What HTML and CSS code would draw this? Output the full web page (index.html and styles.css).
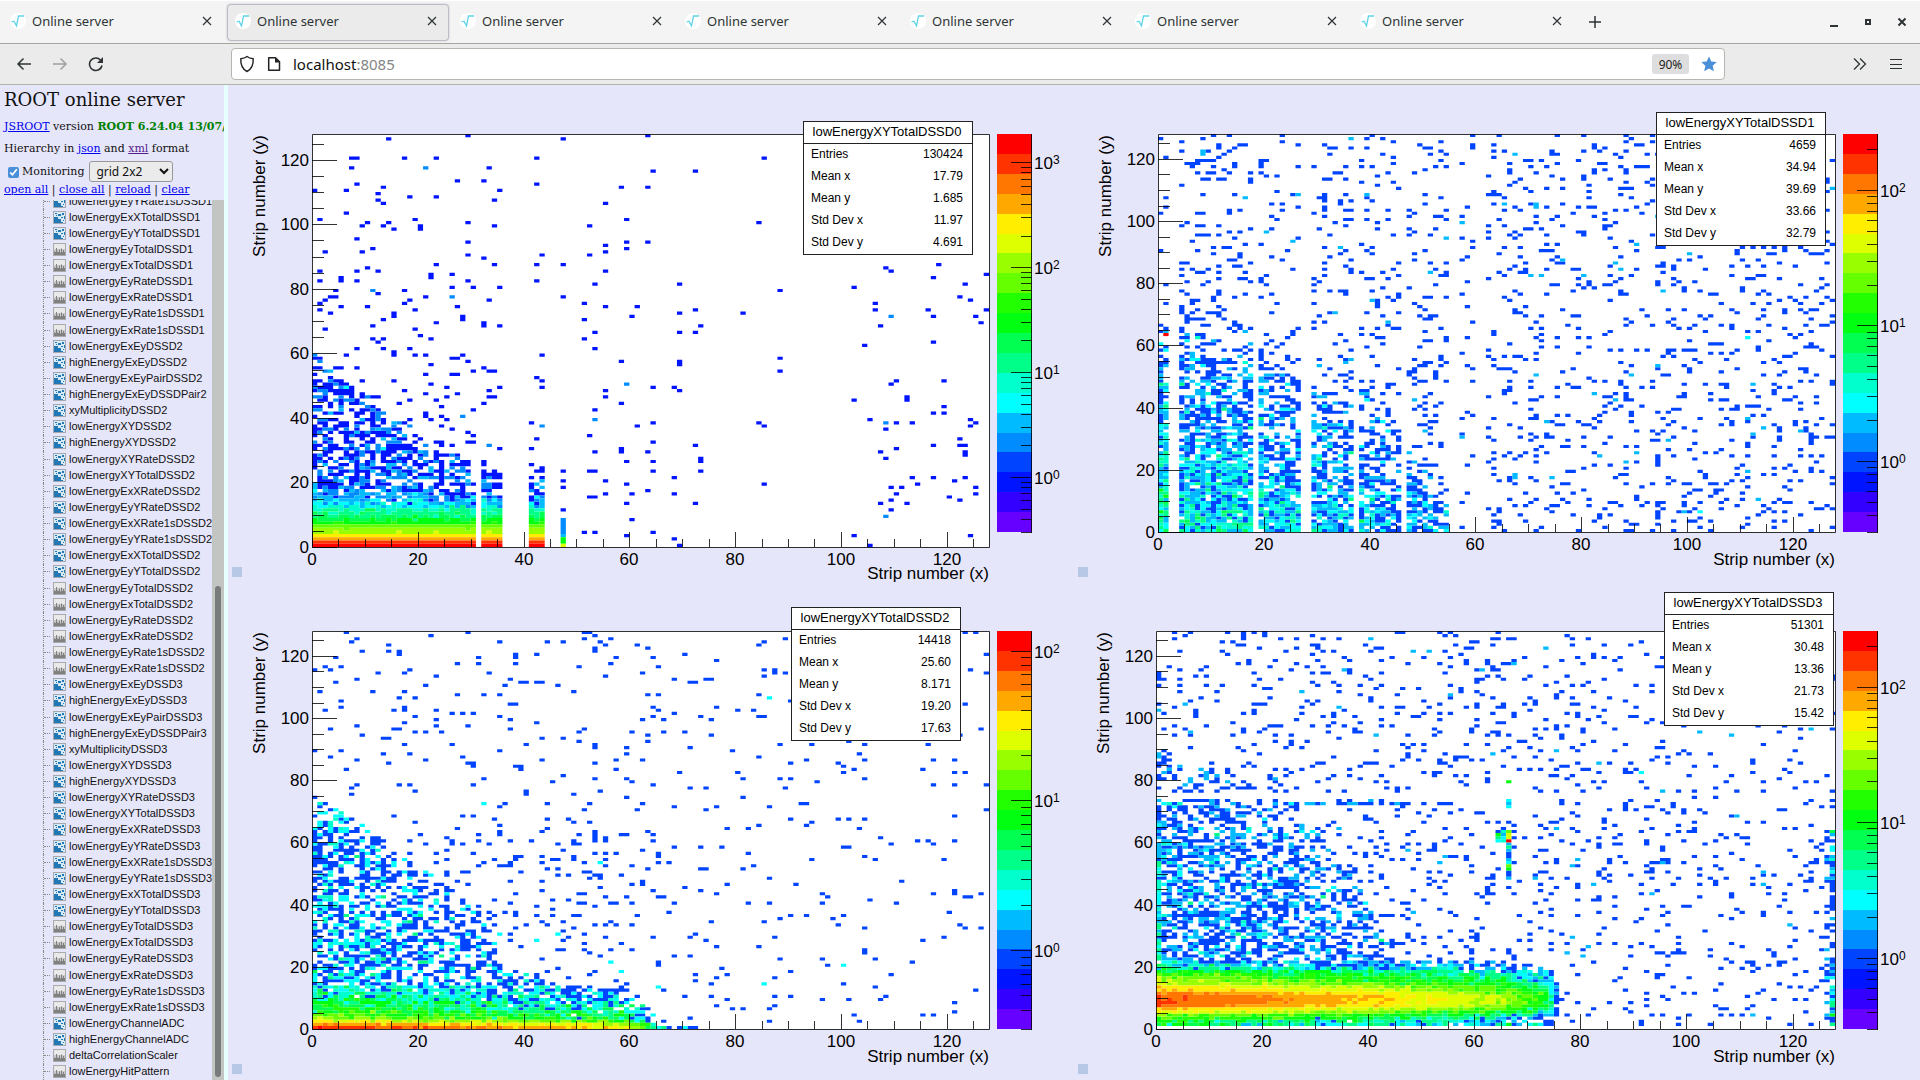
FILE: index.html
```html
<!DOCTYPE html>
<html lang="en">
<head>
  <meta charset="UTF-8">
  <title>Online server</title>
  <link rel="stylesheet" href="styles.css">
</head>
<body>
  <svg class="defs" aria-hidden="true">
    <symbol id="ic-root" viewBox="0 0 16 16"><circle cx="8" cy="8" r="8" fill="#fff"/><path d="M1.500 9l2.500-.8 2.500 4.600L8.500 3h5.500" fill="none" stroke="#5fd3e6" stroke-width="1.300"/></symbol>
    <symbol id="ic-x" viewBox="0 0 10 10"><path d="M1 1l8 8M9 1L1 9" fill="none" stroke="currentColor" stroke-width="1.200"/></symbol>
    <symbol id="ic-h1" viewBox="0 0 13 13"><path d="M0 0h13v13H0z" fill="#aaa"/><path d="M1 1h11v11H1z" fill="#e9e9e9"/><path d="M1 6h11v6H1z" fill="#c8c8c8"/><path d="M1.500 12V8.500M2.500 12V9M3.500 12V5M4.500 12V8.500M5.500 12V9M6.500 12V6.500M7.500 12V9.500M8.500 12V5.500M9.500 12V9M10.500 12V7M11.500 12V9" stroke="#808080" stroke-width="1"/></symbol>
    <symbol id="ic-h2" viewBox="0 0 13 13"><path d="M0 0h13v13H0z" fill="#a3a9ae"/><path d="M1 1h11v11H1z" fill="#d8eaf6"/><path d="M1 6h4v2h3v3h2v1H1zM2 2h2v1H2zM5 3h3v2H5zM9 2h2v2H9zM8 6h2v1H8zM11 5h1v3h-1zM10 9h1v1h-1zM3 4h1v1H3z" fill="#2277b5"/></symbol>
  </svg>

  <div class="tabs" id="tabs"></div>

  <div class="nav">
    <div class="nav-left">
      <button class="icon-btn" aria-label="Back"><svg width="16" height="16" viewBox="0 0 16 16"><path d="M15 8H2M7.500 2.500L2 8l5.500 5.500" fill="none" stroke="#2e3436" stroke-width="1.500"/></svg></button>
      <button class="icon-btn dim" aria-label="Forward"><svg width="16" height="16" viewBox="0 0 16 16"><path d="M1 8h13M8.500 2.500L14 8l-5.500 5.500" fill="none" stroke="#2e3436" stroke-width="1.500"/></svg></button>
      <button class="icon-btn" aria-label="Reload"><svg width="16" height="16" viewBox="0 0 16 16"><path d="M14 9.500A6.300 6.300 0 1 1 12.500 4" fill="none" stroke="#2e3436" stroke-width="1.600"/><path d="M15 1v6H9z" fill="#2e3436"/></svg></button>
    </div>
    <div class="url">
      <svg width="16" height="18" viewBox="0 0 16 18"><path d="M8 1.500c2 1.500 4 2 6.200 2.300C14.500 9.500 13 14 8 16.500 3 14 1.500 9.500 1.800 3.800 4 3.500 6 3 8 1.500z" fill="none" stroke="#222" stroke-width="1.400"/></svg>
      <svg width="14" height="16" viewBox="0 0 14 16"><path d="M1.700 1.700h6.800l4 4v8.600H1.700z" fill="none" stroke="#222" stroke-width="1.500" stroke-linejoin="round"/><path d="M8 1.500v5h5z" fill="#222"/></svg>
      <span class="address">localhost<span class="port">:8085</span></span>
      <button class="zoom">90%</button>
      <button class="star" aria-label="Bookmark"><svg width="16" height="16" viewBox="0 0 16 16"><path d="M8 .5l2.300 4.900 5.400.7-4 3.700 1.100 5.400L8 12.600l-4.800 2.600 1.100-5.400-4-3.700 5.400-.7z" fill="#4a90d9"/></svg></button>
    </div>
    <div class="nav-right">
      <button class="icon-btn" aria-label="More tools"><svg width="14" height="14" viewBox="0 0 14 14"><path d="M1 1.500L6.500 7 1 12.500M7 1.500L12.500 7 7 12.500" fill="none" stroke="#2e3436" stroke-width="1.300"/></svg></button>
      <button class="icon-btn" aria-label="Menu"><svg width="12" height="12" viewBox="0 0 12 12"><path d="M0 1.500h12M0 6.500h12M0 10.500h12" stroke="#2e3436" stroke-width="1"/></svg></button>
    </div>
  </div>

  <div class="page">
    <div class="side">
      <h1>ROOT online server</h1>
      <p><a href="#">JSROOT</a> version <b class="version">ROOT 6.24.04 13/07/2021</b></p>
      <p>Hierarchy in <a href="#">json</a> and <a href="#" class="seen">xml</a> format</p>
      <div class="controls">
        <label class="monitor"><input type="checkbox" checked>Monitoring</label>
        <select aria-label="Layout"><option>grid 2x2</option></select>
      </div>
      <div class="links"><a href="#">open all</a> | <a href="#">close all</a> | <a href="#">reload</a> | <a href="#">clear</a></div>
      <div class="browser">
        <ul class="tree" id="tree"></ul>
        <div class="scroll"><div class="thumb"></div></div>
      </div>
    </div>
    <div class="splitter"></div>
    <div class="grid" id="grid"></div>
  </div>
  <script src="main.js"></script>
</body>
</html>
```
FILE: styles.css
```css
* { box-sizing: border-box; }
html, body { height: 100%; margin: 0; }
body { display: flex; flex-direction: column; background: #e6e6fa; overflow: hidden; font-family: "Noto Sans", sans-serif; }
button { border: none; background: transparent; padding: 0; font-family: inherit; color: inherit; display: flex; align-items: center; justify-content: center; }
.defs { display: none; }

.tabs { display: flex; align-items: center; height: 44px; background: #f4f4f4; border-top: 1px solid #fff; border-bottom: 1px solid #a5a5a0; color: #2e3436; }
.tab { width: 222px; height: 37px; margin-right: 3px; padding: 0 11px 2px 7px; display: flex; align-items: center; gap: 6px; font-size: 13px; border: 1px solid transparent; border-radius: 4px; }
.tab:first-child { margin-left: 2px; }
.tab.active { background: #ebebeb; border-color: #bcbcc6; box-shadow: 0 0 2px #bcbcc6; }
.tab span { flex: 1; }
.new-tab { margin-left: 11px; }
.window { margin-left: auto; margin-right: 12px; display: flex; gap: 22px; }
.window button { width: 12px; height: 12px; }

.nav { display: flex; align-items: center; height: 41px; background: #ebebeb; border-bottom: 1px solid #b3b3ad; }
.nav-left { width: 231px; padding-left: 16px; display: flex; gap: 20px; }
.nav-right { width: 195px; padding-right: 18px; display: flex; gap: 23px; justify-content: flex-end; }
.icon-btn { min-width: 12px; height: 16px; }
.dim { opacity: 0.4; }
.url { flex: 1; height: 32px; padding: 0 7px; background: #fff; border: 1px solid #b6b6b0; border-radius: 4px; display: flex; align-items: center; gap: 12px; }
.address { flex: 1; padding-bottom: 1px; font-size: 15px; color: #111; }
.port { color: #858585; }
.zoom { width: 37px; height: 20px; border-radius: 3px; background: #dedede; font-size: 12px; color: #222; }

.page { flex: 1; min-height: 0; display: flex; }
.side { width: 224px; display: flex; flex-direction: column; overflow: hidden; font: 11px/16px "DejaVu Serif", serif; color: #111; }
.side h1 { margin: 2px 4px 7px; font-size: 18px; line-height: 25px; font-weight: normal; }
.side p { margin: 0 0 6px 4px; white-space: nowrap; }
a { color: #0000ee; }
.seen { color: #551a8b; }
.version { color: green; }
.controls { display: flex; align-items: center; gap: 5px; margin: -2px 0 0 8px; }
.monitor { display: flex; align-items: center; gap: 3px; }
.monitor input { width: 11px; height: 11px; margin: 1px 0 0; accent-color: #4a90d9; }
.controls select { width: 84px; height: 21px; padding: 0 2px; border: 1px solid #999; border-radius: 3px; background: #ebebeb; font: 12px "Noto Sans", sans-serif; color: #111; }
.links { margin-left: 4px; height: 18px; }
.browser { flex: 1; min-height: 0; display: flex; overflow: hidden; }

.tree { flex: 1; margin: -7px 0 0 43px; padding: 0; list-style: none; display: flex; flex-direction: column; font: 11px/13px "Liberation Sans", sans-serif; }
.tree li { flex: 1; display: flex; align-items: center; gap: 3px; border-left: 1px dotted #888; }
.tree li::before { content: ""; width: 6px; border-top: 1px dotted #888; }
.tree svg { width: 13px; height: 13px; }
.tree a { color: #111; text-decoration: none; }
.scroll { width: 12px; display: flex; align-items: flex-end; justify-content: center; background: #c2c5c2; padding-bottom: 3px; }
.thumb { width: 6px; height: 56%; border-radius: 3px; background: #787b7b; }
.splitter { width: 4px; background: #e8ffff; }

.grid { flex: 1; display: grid; grid-template-columns: 1fr 1fr; grid-template-rows: 1fr 1fr; padding-bottom: 1px; }
.pad { position: relative; min-width: 0; min-height: 0; }
.plot { display: block; width: 100%; height: 100%; font: 17px "Liberation Sans", sans-serif; }
.plot .line { fill: none; stroke: #000; stroke-opacity: 0.8; }
.plot .handle { fill: #b6c8e6; }
.plot .exp { font-size: 12px; }
.end { text-anchor: end; }
.mid { text-anchor: middle; }

.stats { position: absolute; width: 170px; background: #fff; border: 1px solid #222; border-collapse: separate; border-spacing: 0; font: 12px "Liberation Sans", sans-serif; color: #000; }
.stats th, .stats td { height: 22px; padding: 0 9px 2px 7px; text-align: left; font-weight: normal; }
.stats thead th { text-align: center; font-size: 13px; border-bottom: 1px solid #222; padding-bottom: 3px; }
.stats td { text-align: right; }
.stats tr:last-child td { height: 20px; }
.stats0 { left: 575px; top: 36px; }
.stats1 { left: 582px; top: 27px; }
.stats2 { left: 563px; top: 25px; }
.stats3 { left: 590px; top: 10px; }
```
FILE: main.js
```js
const SVG = 'http://www.w3.org/2000/svg';
const COLORS = ['#6600ff', '#3300ff', '#0014ff', '#0044ff', '#008cff', '#00bbff', '#00ffff', '#00ffcc', '#00ff88', '#00ff50',
  '#00ff11', '#22ff00', '#66ff00', '#99ff00', '#ddff00', '#ffee00', '#ffa800', '#ff7700', '#ff3300', '#ff0000'];

// browser tabs
const tabs = document.getElementById('tabs');
let html = '';
for (let i = 0; i < 7; i++) {
  html += `<div class="tab${i === 1 ? ' active' : ''}"><svg width="16" height="16"><use href="#ic-root"/></svg><span>Online server</span>` +
    '<button aria-label="Close tab"><svg width="10" height="10"><use href="#ic-x"/></svg></button></div>';
}
html += '<button class="new-tab" aria-label="New tab"><svg width="14" height="14"><path d="M7 1v12M1 7h12" stroke="#2e3436" stroke-width="1.500"/></svg></button>';
html += '<div class="window"><button aria-label="Minimize"><svg width="12" height="12"><path d="M2 9h8v2H2z" fill="#2e3436"/></svg></button>' +
  '<button aria-label="Maximize"><svg width="12" height="12"><path d="M4 4h4v4H4z" fill="none" stroke="#2e3436" stroke-width="2"/></svg></button>' +
  '<button aria-label="Close"><svg width="12" height="12"><path d="M2.500 2.500l7 7M9.500 2.500l-7 7" stroke="#2e3436" stroke-width="2"/></svg></button></div>';
tabs.innerHTML = html;

// hierarchy
const first = ['lowEnergyEyYRate1s', 'lowEnergyExXTotal', 'lowEnergyEyYTotal', 'lowEnergyEyTotal', 'lowEnergyExTotal',
  'lowEnergyEyRate', 'lowEnergyExRate', 'lowEnergyEyRate1s', 'lowEnergyExRate1s'];
const full = ['lowEnergyExEy', 'highEnergyExEy', 'lowEnergyExEyPair', 'highEnergyExEyDSSDPair', 'xyMultiplicity', 'lowEnergyXY', 'highEnergyXY',
  'lowEnergyXYRate', 'lowEnergyXYTotal', 'lowEnergyExXRate', 'lowEnergyEyYRate', 'lowEnergyExXRate1s'].concat(first);
const items = first.map(n => n + 'DSSD1');
for (const d of [2, 3]) full.forEach(n => items.push(n.includes('DSSD') ? n + d : n + 'DSSD' + d));
items.push('lowEnergyChannelADC', 'highEnergyChannelADC', 'deltaCorrelationScaler', 'lowEnergyHitPattern');
document.getElementById('tree').innerHTML = items.map(n => {
  const one = /Energy(Ex|Ey)(Total|Rate)|Scaler|Pattern/.test(n);
  return `<li><svg><use href="#ic-h${one ? 1 : 2}"/></svg><a href="#">${n}</a></li>`;
}).join('');

// random numbers
let seed = 7;
function rnd() {
  seed = (seed * 1664525 + 1013904223) % 4294967296;
  return seed / 4294967296;
}
function poisson(m) {
  if (m > 30) return Math.round(m + Math.sqrt(m) * (rnd() + rnd() + rnd() - 1.5) * 1.6);
  let k = 0, p = rnd();
  const lim = Math.exp(-m);
  while (p > lim) { k++; p *= rnd(); }
  return k;
}
// piecewise linear lookup
function lerp(t, pts) {
  if (t <= pts[0][0]) return pts[0][1];
  for (let i = 1; i < pts.length; i++) {
    const [x0, y0] = pts[i - 1], [x1, y1] = pts[i];
    if (t <= x1) return y0 + (y1 - y0) * (t - x0) / (x1 - x0);
  }
  return pts[pts.length - 1][1];
}

// row:columns, * marks a double hit
const HITS0 = '127:29 63|126:14 47|125:103|120:7 8 17 23 42 85|117:7 21* 33|116:64 72|113:27 32|112:8 42|111:13 58 63|110:0 6 35|109:12|108:18 23|' +
  '107:12 34|106:13 55|103:6|101:1 19 59|100:10 14 29 84|99:9 13 20 34 52|98:15 20|95:8|94:29 59 63|93:55|92:11 59|91:2 9 55|90:29 43 52|89:32|' +
  '87:23 34 42 47 118|86:10 108|85:1 8 12 55 109|84:22 26 127|83:5 22 117|82:1 5 8 29 42|81:53 69 123|80:26 30 35 102|79:4 11* 17 88|78:12|' +
  '77:3 4 21 26* 47 122|76:2 18 33 124|75:1 17 51 106|74:5 10 27 55 61|73:1 19 72 106 116 127|72:3 15 69 81|71:15 28 60 109* 117 125|70:13 28 51|' +
  '69:23 32 126|68:11 32 35 73 107|67:2 19|66:53 69 72|65:20|64:11 13 22 51|63:12 117|62:104|61:8 13 18 53|59:15 19 21 28 43|58:88|57:58 69|56:69|' +
  '55:32|54:30 33 34 88|52:42|51:43 110 119|50:59* 109|49:35 43 64 68|48:33 55 69|46:33 34 55 112|45:102 112|44:32 58|43:119|42:30 53|41:117 119|' +
  '40:28*|39:53* 105 124|38:41 64 84 108* 110 113 125|37:43* 61 85 124|36:108|34:30 52|33:42 122|32:30 64|31:33* 72 117 122 123|30:35 41 58 110|' +
  '29:53 58 63 107 123|28:123|27:73 108|26:32 59 64 73|25:32 41|24:43|23:34 42 43 47 52 53 64 73|22:35|21:43 68 113 117 123|20:47 55 121|19:59 85 114|' +
  '18:47 109 111 125|17:63|16:55 60 68 110 125|15:52 53 120|14:109 122|13:59 72 107 112|11:47 109|9:108*|8:60|4:51 53 64|3:59 102 124|2:68|0:69 105';

function hits0() {
  const map = {};
  HITS0.split('|').forEach(s => {
    const [row, cols] = s.split(':');
    cols.split(' ').forEach(c => { map[parseInt(c) + ',' + row] = c.endsWith('*') ? 2 : 1; });
  });
  return map;
}
const known = hits0();

function count0(x, y) {
  if (known[x + ',' + y]) return known[x + ',' + y];
  if (x === 47 && y < 9) return [150, 25, 25, 3, 2, 2, 2, 2, 2][y];
  if (x === 31 || (x > 35 && x < 41) || x > 43 || y > 60) return 0;
  const edge = lerp(x, [[0, 60], [4, 53], [10, 46], [20, 33], [30, 25], [44, 20]]);
  let l = lerp(y, [[0, 3.2], [1, 3], [2, 2.65], [3, 2.4], [4, 2.1], [5, 2], [6, 1.85], [7, 1.5], [8, 1.38], [9, 1.2], [11, 1], [13, 0.75], [15, 0.45], [18, 0.2], [22, 0.05], [40, -0.05], [60, -0.1]]);
  if (y > 11) l -= x * 0.006;
  if (y > edge) return x < 30 ? poisson(0.09) : 0;
  return poisson(Math.pow(10, l));
}

function count1(x, y) {
  if ([2, 3, 18, 27, 28, 37, 46, 55, 56, 60, 61].includes(x)) return 0;
  if (x === 1 && y === 63) return 240;
  const bg = x < 55 ? 0.12 : x < 60 ? 0.08 : 0.12;
  const edge = lerp(x, [[0, 66], [18, 60], [26, 48], [36, 42], [45, 32], [49, 16], [54, 8], [58, 0]]);
  if (x > 54 || y > edge + 8) return poisson(bg);
  if (y > edge) return poisson(0.25);
  let m = lerp(y, [[0, 3.6], [12, 2.4], [25, 1.5], [45, 0.85], [65, 0.5]]);
  if (x > 18) m *= lerp(x, [[19, 0.75], [45, 0.4], [54, 0.3]]);
  if (x < 2) m *= 1.7;
  return poisson(m);
}

function count2(x, y) {
  const edge = lerp(x, [[0, 74], [10, 64], [16, 56], [22, 49], [31, 37], [36, 21], [45, 14], [58, 12], [64, 5], [65, 0]]);
  if (y > edge) return poisson(x < 66 ? (y < 64 && x > 24 ? 0.1 : 0.045) : 0.028);
  let l = lerp(y, [[0, 1.95], [1, 1.75], [2, 1.5], [3, 1.25], [5, 1.05], [8, 0.8], [11, 0.55], [15, 0.25], [22, 0.1], [50, 0], [74, -0.1]]);
  l -= y < 3 ? x * 0.007 : x * 0.009;
  if (x > 59) l -= (x - 59) * 0.15;
  return poisson(Math.pow(10, l));
}

function count3(x, y) {
  if (y === 0) return 0;
  if (x === 66) {
    if (y === 60) return 240;
    if (y === 61 || y === 62) return 40;
    if (y === 63 || y === 52) return 20;
    if (y === 51 || y === 79 || y === 1) return 10;
    if (y > 47 && y < 60 || y > 69 && y < 74) return poisson(2);
  }
  if ((x === 64 || x === 65) && y > 59 && y < 64) return poisson(6);
  if (x === 127 && (y > 47 && y < 64 || y < 22)) return poisson(y === 4 || y === 63 ? 10 : 2.2);
  if (x > 125 && y < 64) return poisson(0.6);
  if ((y === 74 || y === 75) && x < 100) return 0;
  if (y < 22 && x < 76) {
    const peak = lerp(x, [[0, 2.12], [20, 1.98], [40, 1.82], [55, 1.65], [66, 1.45], [71, 1.2], [74, 0.9], [76, 0]]);
    const off = lerp(y, [[1, -1.2], [2, -1.15], [3, -0.9], [4, -0.75], [5, -0.42], [6, -0.25], [7, -0.06], [8, 0], [10, 0], [11, -0.1], [12, -0.25], [13, -0.35], [14, -0.55], [16, -0.75], [18, -1], [19, -1.3], [21, -1.8]]);
    return poisson(Math.pow(10, peak + off));
  }
  if (y === 72 && x < 58) return poisson(0.8);
  const edge = lerp(x, [[0, 88], [10, 85], [22, 73], [30, 62], [37, 50], [40, 38], [44, 24], [46, 20]]);
  const bg = x < 78 ? 0.11 : 0.085;
  if (x > 45 || y > edge) return poisson(bg);
  let m = y > 75 ? 0.45 : lerp(y, [[22, 1], [45, 0.9], [75, 0.6]]) * lerp(x, [[0, 1.4], [8, 1.1], [40, 0.75]]);
  if (x === 0) m *= 2.5;
  return poisson(m);
}

const pads = [
  { name: 'DSSD0', count: count0, bottom: 462, left: 84, lmax: 3.27, stats: ['130424', '17.79', '1.685', '11.97', '4.691'] },
  { name: 'DSSD1', count: count1, bottom: 447, left: 84, lmax: 2.412, stats: ['4659', '34.94', '39.69', '33.66', '32.79'] },
  { name: 'DSSD2', count: count2, bottom: 447, left: 84, lmax: 2.131, stats: ['14418', '25.60', '8.171', '19.20', '17.63'] },
  { name: 'DSSD3', count: count3, bottom: 447, left: 82, lmax: 2.41, stats: ['51301', '30.48', '13.36', '21.73', '15.42'] }
];
const LMIN = -0.525;
const STAT_NAMES = ['Entries', 'Mean x', 'Mean y', 'Std Dev x', 'Std Dev y'];

function drawPad(pad, idx) {
  const W = 846, H = 497, left = pad.left, right = 761, top = 49, bottom = pad.bottom;
  const dx = (right - left) / 128, dy = (bottom - top) / 128;
  const px = v => left + v * dx, py = v => bottom - v * dy;
  let s = `<rect x="${left}" y="${top}" width="${right - left}" height="${bottom - top}" fill="#fff"/>`;

  const cells = COLORS.map(() => '');
  for (let x = 0; x < 128; x++) {
    for (let y = 0; y < 128; y++) {
      const n = pad.count(x, y);
      if (n < 1) continue;
      const lvl = Math.floor((Math.log10(n) - LMIN) / (pad.lmax - LMIN) * 20);
      cells[Math.max(0, Math.min(19, lvl))] += `M${px(x).toFixed(2)} ${py(y + 1).toFixed(2)}h${dx.toFixed(2)}v${dy.toFixed(2)}h-${dx.toFixed(2)}z`;
    }
  }
  cells.forEach((d, i) => { if (d) s += `<path d="${d}" fill="${COLORS[i]}"/>`; });

  // axes
  let d = `M${left + 0.5} ${top + 0.5}H${right + 0.5}V${bottom + 0.5}H${left + 0.5}z`;
  for (let v = 0; v <= 125; v += 5) {
    const major = v % 20 === 0;
    const x = Math.round(px(v)) + 0.5, y = Math.round(py(v)) + 0.5;
    d += `M${x} ${bottom}v-${major ? 15 : 8}M${left} ${y}h${major ? 25 : 12}`;
    if (major) {
      s += `<text class="mid" x="${Math.round(px(v))}" y="${bottom + 18}">${v}</text>`;
      s += `<text class="end" x="${left - 3}" y="${y + 5}">${v}</text>`;
    }
  }
  s += `<text class="end" x="${right}" y="${bottom + (idx ? 33 : 32)}">Strip number (x)</text>`;
  s += `<text class="end" transform="translate(${left - 47} ${top + 1}) rotate(-90)">Strip number (y)</text>`;

  // palette
  const p0 = 447, ph = (p0 - top) / 20, pl = 769, pr = 804;
  COLORS.forEach((c, i) => {
    const y1 = Math.round(p0 - (i + 1) * ph), y2 = Math.round(p0 - i * ph);
    s += `<rect x="${pl}" y="${y1}" width="${pr - pl}" height="${y2 - y1}" fill="${c}"/>`;
  });
  d += `M${pr - 0.5} ${top}V${p0 + 1}`;
  for (let e = -1; e < 4; e++) {
    for (let k = 1; k < 10; k++) {
      const l = e + Math.log10(k);
      if (l < LMIN - 0.01 || l > pad.lmax) continue;
      const y = Math.round(p0 - (l - LMIN) / (pad.lmax - LMIN) * (p0 - top)) + 0.5;
      d += `M${pr} ${y}h-${k === 1 ? 21 : 11}`;
      if (k === 1) s += `<text x="${pr + 2}" y="${y + 6}">10<tspan class="exp" dy="-5">${e}</tspan></text>`;
    }
  }
  s += `<path class="line" d="${d}"/><rect class="handle" x="4" y="482" width="10" height="10"/>`;

  const el = document.createElement('div');
  el.className = 'pad';
  const svg = document.createElementNS(SVG, 'svg');
  svg.setAttribute('class', 'plot');
  svg.setAttribute('viewBox', `0 0 ${W} ${H}`);
  svg.innerHTML = s;
  el.appendChild(svg);
  el.insertAdjacentHTML('beforeend', `<table class="stats stats${idx}"><thead><tr><th colspan="2">lowEnergyXYTotal${pad.name}</th></tr></thead><tbody>` +
    STAT_NAMES.map((n, i) => `<tr><th>${n}</th><td>${pad.stats[i]}</td></tr>`).join('') + '</tbody></table>');
  document.getElementById('grid').appendChild(el);
}
pads.forEach(drawPad);
```
